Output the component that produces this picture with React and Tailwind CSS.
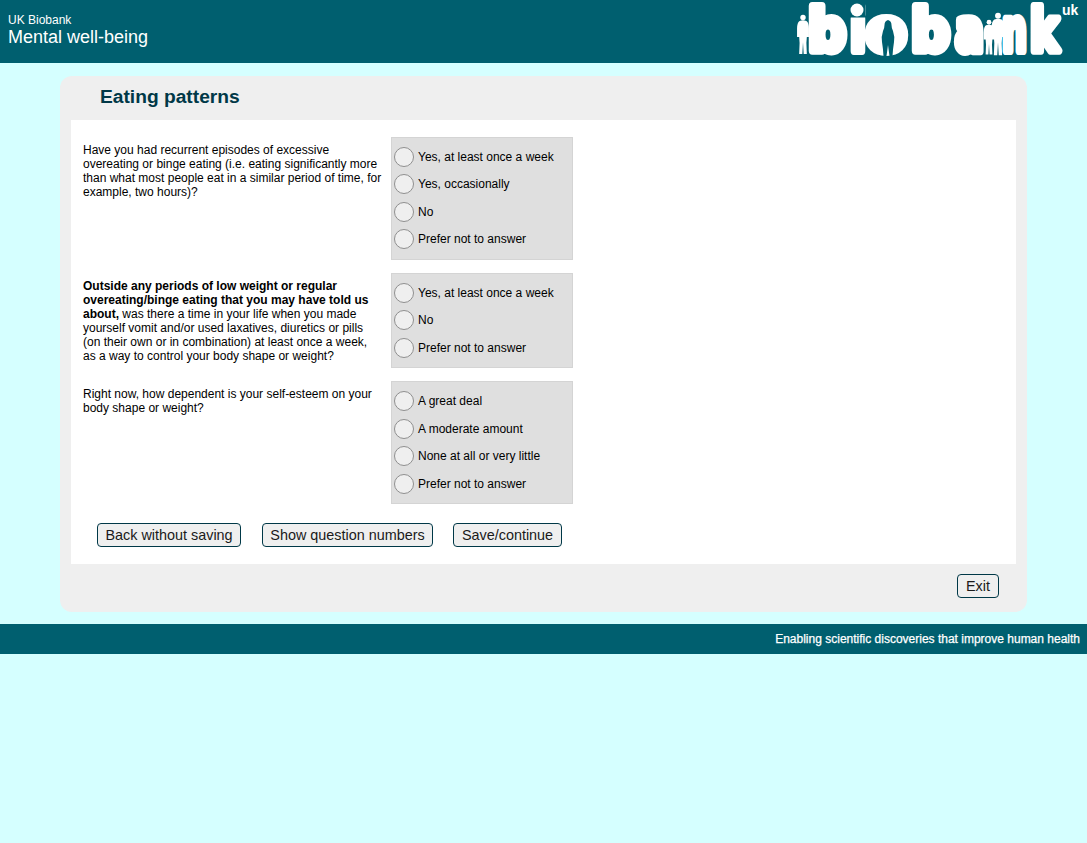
const Radio = ({ label }) => (
  <label className="flex h-[27.4px] items-center">
    <span className="ml-[2px] h-[20px] w-[20px] shrink-0 rounded-full border border-[#8f8f8f] bg-[#efefef]" />
    <span className="ml-[4px] text-[12px] leading-[14px] text-black">{label}</span>
  </label>
);

const Question = ({ children, options, boxClass }) => (
  <div className="flex">
    <div className="w-[308px] shrink-0 pr-[8px] pt-[6px] text-[12px] leading-[14px] text-black">{children}</div>
    <div className={"flex w-[182px] flex-col justify-center border border-[#d4d4d4] bg-[#dfdfdf] " + boxClass}>
      {options.map((o) => (
        <Radio key={o} label={o} />
      ))}
    </div>
  </div>
);

const Btn = ({ children, className = "" }) => (
  <button className={"h-[24px] rounded-[4px] border border-[#003847] bg-[#efefef] text-[14.4px] leading-[16px] text-[#1a1a1a] " + className}>
    {children}
  </button>
);

const Person = ({ x, y, s = 1 }) => (
  <g transform={`translate(${x} ${y}) scale(${s})`} fill="#fff">
    <circle cx="0" cy="3" r="3.2" />
    <path d="M-4 7 Q0 5.5 4 7 Q7 9 7 16 L7 26 L4.5 26 L4 33 L4.5 46 L0.8 46 L0 32 L-0.8 46 L-4.5 46 L-4 33 L-4.5 26 L-7 26 L-7 16 Q-7 9 -4 7 Z" />
  </g>
);

const L = ({ c, x, sx }) => (
  <text
    transform={`translate(${x} 51) scale(${sx} 1)`}
    fontFamily="'DejaVu Sans', sans-serif"
    fontWeight="700"
    fontSize="58"
    fill="#fff"
    stroke="#fff"
    strokeWidth="8"
    strokeLinejoin="round"
  >
    {c}
  </text>
);

const Logo = () => (
  <svg width="297" height="63" viewBox="0 0 297 63" className="block">
    <L c="b" x={18} sx={0.92} />
    <L c="i" x={60} sx={0.8} />
    <rect x="59" y="0" width="16" height="17.5" fill="#005f6f" />
    <circle cx="67" cy="10" r="6.5" fill="#fff" />
    <L c="o" x={76} sx={1.02} />
    <L c="b" x={121} sx={0.94} />
    <L c="a" x={165} sx={0.74} />
    <L c="n" x={212} sx={0.6} />
    <L c="k" x={240} sx={0.74} />
    <ellipse cx="98" cy="37" rx="10" ry="12" fill="#fff" />
    <path
      d="M98 20 Q94.5 21 94.5 25 Q94.5 28 93 31 Q91 37 92 42 Q93 48 93.5 56 L96.5 56 L98 45 L99.5 56 L102.5 56 Q103 48 104 42 Q105 37 103 31 Q101.5 28 101.5 25 Q101.5 21 98 20 Z"
      fill="#005f6f"
    />
    <Person x={13} y={15} s={0.85} />
    <Person x={208} y={13} s={0.92} />
    <Person x={199} y={20} s={0.75} />
    <text x="272" y="15" fontFamily="'Liberation Sans', sans-serif" fontWeight="700" fontSize="14" fill="#fff">
      uk
    </text>
  </svg>
);

export default function App() {
  return (
    <div className="min-h-[843px] bg-[#d5ffff] font-['Liberation_Sans',Arial,sans-serif]">
      <header className="flex h-[63px] items-start justify-between bg-[#005f6f] pl-[8px] text-white">
        <div className="pt-[13px]">
          <div className="text-[12px] leading-[14px]">UK Biobank</div>
          <div className="text-[18px] leading-[20px]">Mental well-being</div>
        </div>
        <Logo />
      </header>

      <main className="mx-[60px] mt-[13px] h-[536px] rounded-[12px] bg-[#efefef] px-[11px]">
        <h1 className="pl-[29px] pt-[9px] text-[19.2px] font-bold leading-[24px] text-[#003847]">Eating patterns</h1>
        <div className="mt-[11px] h-[444px] bg-white pl-[12px] pt-[17px]">
          <div className="flex flex-col gap-[13px]">
            <Question boxClass="h-[123px] pb-[0.8px]" options={["Yes, at least once a week", "Yes, occasionally", "No", "Prefer not to answer"]}>
              Have you had recurrent episodes of excessive overeating or binge eating (i.e. eating significantly more
              than what most people eat in a similar period of time, for example, two hours)?
            </Question>
            <Question boxClass="h-[95px]" options={["Yes, at least once a week", "No", "Prefer not to answer"]}>
              <b>Outside any periods of low weight or regular overeating/binge eating that you may have told us about,</b>{" "}
              was there a time in your life when you made yourself vomit and/or used laxatives, diuretics or pills (on
              their own or in combination) at least once a week, as a way to control your body shape or weight?
            </Question>
            <Question boxClass="h-[123px]" options={["A great deal", "A moderate amount", "None at all or very little", "Prefer not to answer"]}>
              Right now, how dependent is your self-esteem on your body shape or weight?
            </Question>
          </div>
          <div className="ml-[14px] mt-[19px] flex">
            <Btn className="w-[144px]">Back without saving</Btn>
            <Btn className="ml-[21px] w-[171px]">Show question numbers</Btn>
            <Btn className="ml-[20px] w-[109px]">Save/continue</Btn>
          </div>
        </div>
        <div className="flex justify-end pr-[17px] pt-[10px]">
          <Btn className="w-[42px]">Exit</Btn>
        </div>
      </main>

      <footer className="mt-[12px] flex h-[30px] items-center justify-end bg-[#005f6f] pb-[1px] pr-[7px] text-[12px] text-white [-webkit-text-stroke:0.25px_#fff]">
        Enabling scientific discoveries that improve human health
      </footer>
    </div>
  );
}
